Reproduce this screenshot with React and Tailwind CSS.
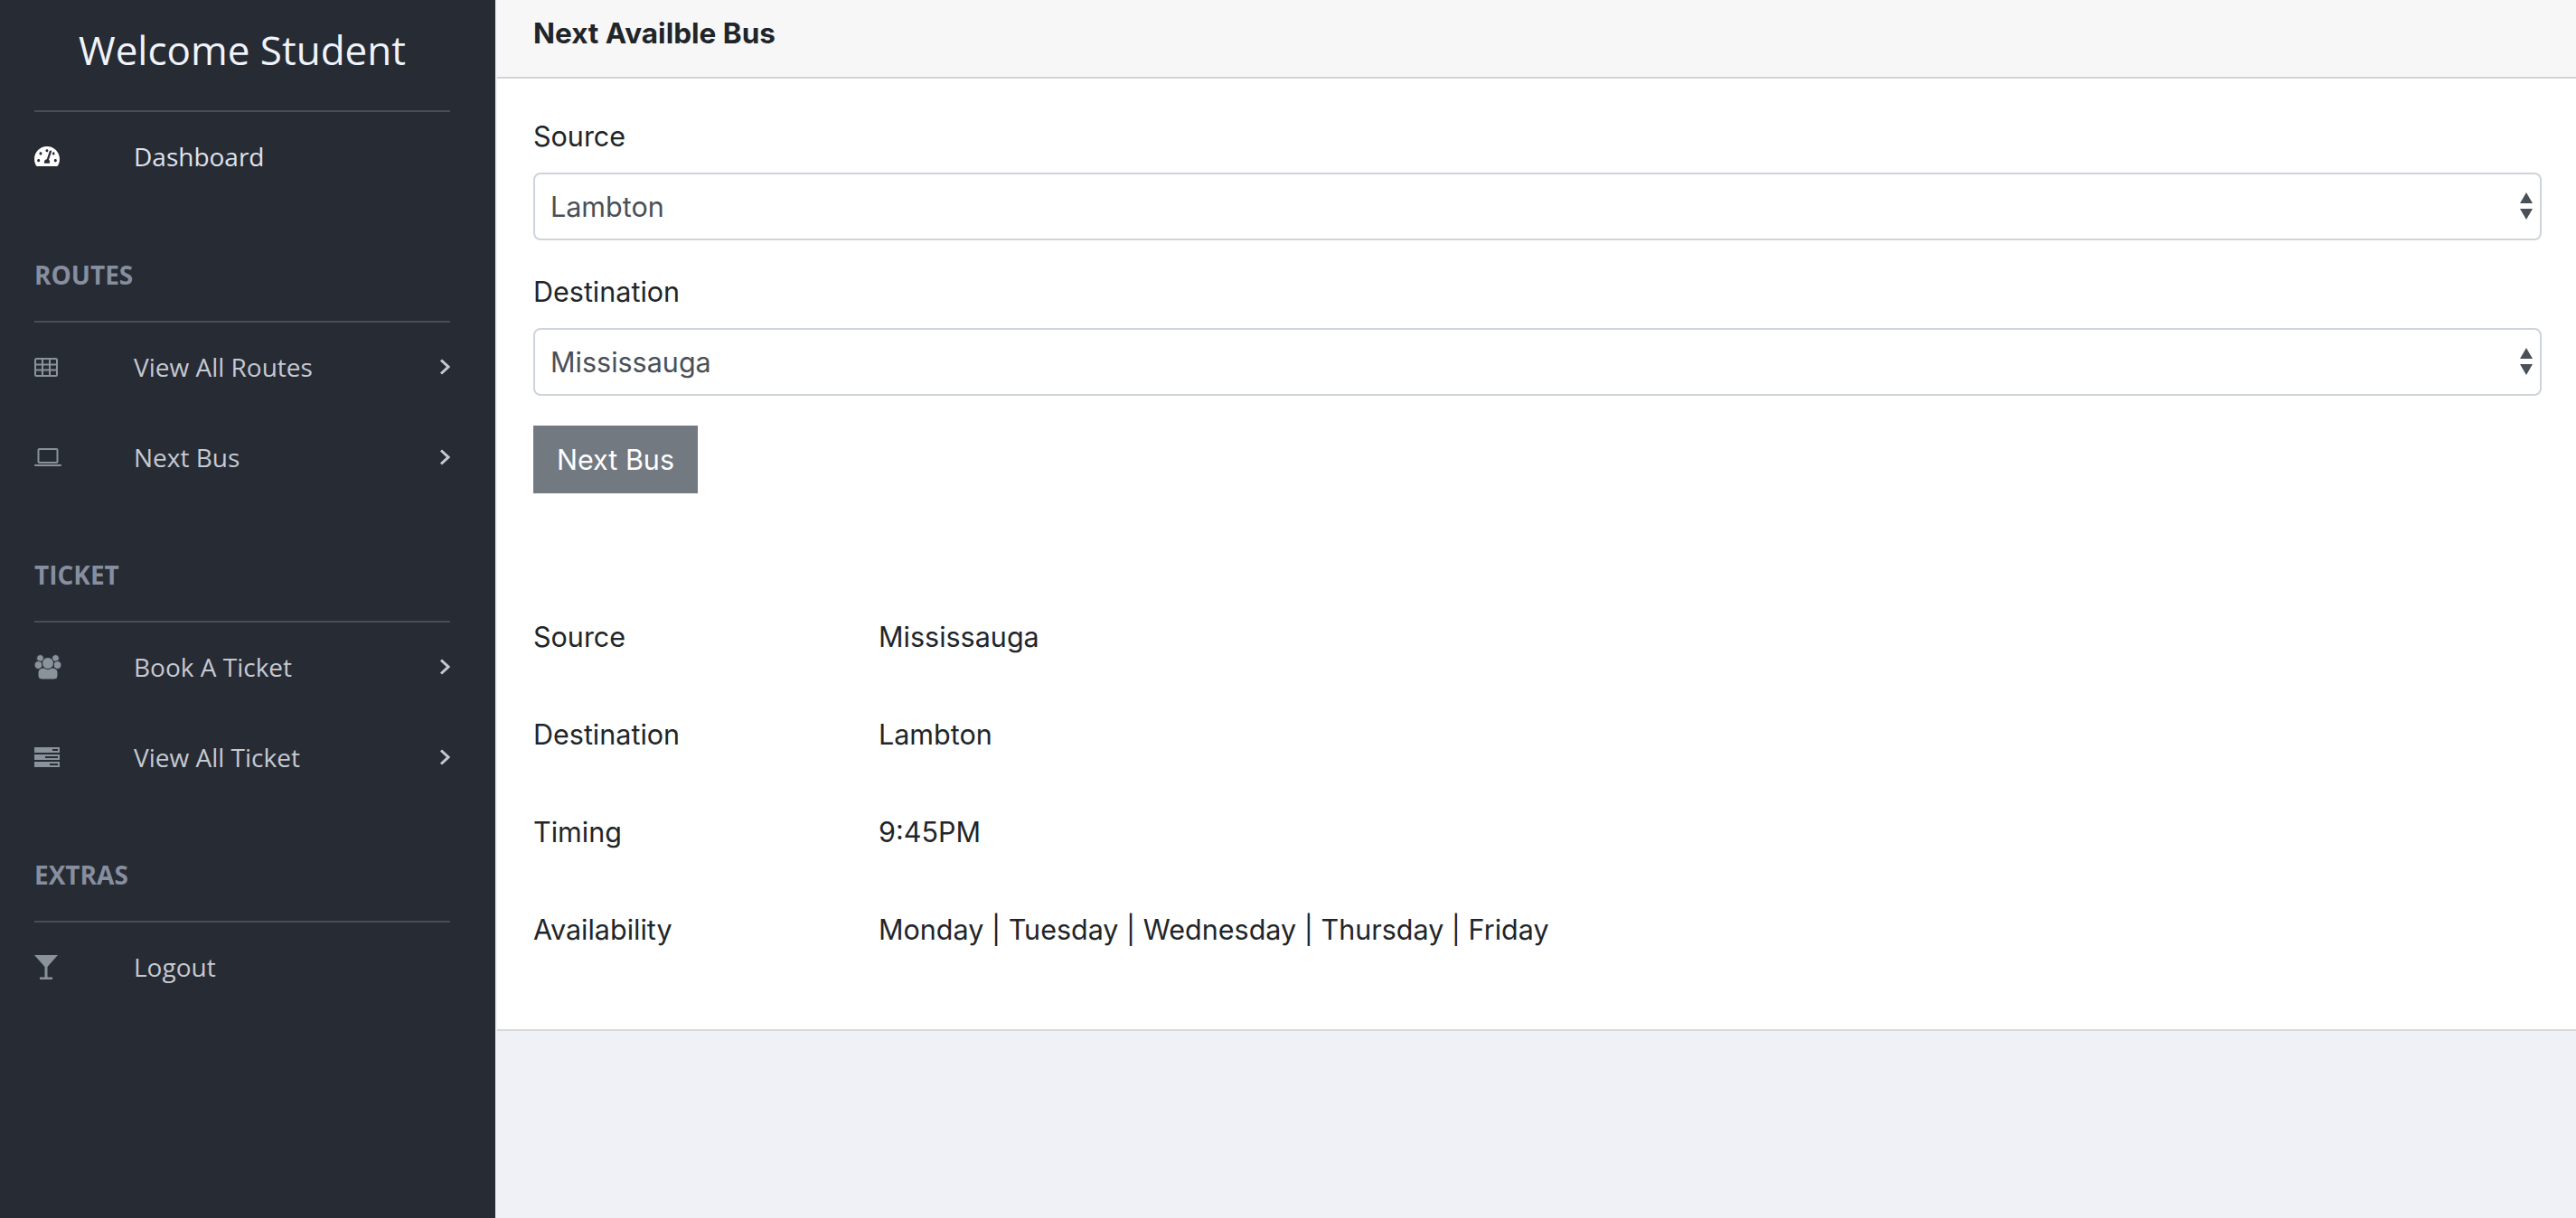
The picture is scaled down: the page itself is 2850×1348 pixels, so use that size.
import React from 'react';
import { FaTachometerAlt } from 'react-icons/fa';

const TableIcon = () => (
  <svg width="26" height="21" viewBox="0 0 26 21" fill="none" stroke="#8a929c" strokeWidth="2">
    <rect x="1" y="1" width="24" height="19" rx="1.5" />
    <path d="M1 7.5H25M1 13.5H25M9 2V20M17 2V20" />
  </svg>
);

const LaptopIcon = () => (
  <svg width="30" height="20" viewBox="0 0 30 20" fill="none">
    <rect x="4.5" y="1" width="21" height="15" rx="1" stroke="#8a929c" strokeWidth="2" />
    <path d="M0 18H30V18.5A1.5 1.5 0 0 1 28.5 20H1.5A1.5 1.5 0 0 1 0 18.5Z" fill="#8a929c" />
  </svg>
);

const UsersIcon = () => (
  <svg width="30" height="28" viewBox="0 0 30 28" fill="#8a929c" stroke="#272b34" strokeWidth="1">
    <circle cx="6.5" cy="4.5" r="4" />
    <circle cx="23.5" cy="4.5" r="4" />
    <circle cx="4.5" cy="12" r="4.5" />
    <circle cx="25.5" cy="12" r="4.5" />
    <path d="M4 21C4 17 7 15 10 15H20C23 15 26 17 26 21V24A4 4 0 0 1 22 28H8A4 4 0 0 1 4 24Z" />
    <circle cx="15" cy="10" r="6.5" />
  </svg>
);

const ServerIcon = () => (
  <svg width="28" height="22" viewBox="0 0 28 22">
    <path fill="#8a929c" d="M0 0H28V6H0ZM0 8H28V14H0ZM0 16H28V22H0Z" />
    <path fill="#272b34" d="M20 2H26V4H20ZM12 10H26V12H12ZM17 18H26V20H17Z" />
  </svg>
);

const MartiniIcon = () => (
  <svg width="26" height="27" viewBox="0 0 26 27" fill="#8a929c">
    <path d="M0 0H26L14.5 13V24.5H20V27H6V24.5H11.5V13Z" />
  </svg>
);

const Chevron = () => (
  <svg width="12" height="18" viewBox="0 0 12 18" fill="none" stroke="#c5c9d2" strokeWidth="3">
    <path d="M2 1.5L10 9L2 16.5" />
  </svg>
);

const sections = [
  {
    title: 'ROUTES',
    pad: 'pt-[61px]',
    items: [
      { label: 'View All Routes', icon: <TableIcon /> },
      { label: 'Next Bus', icon: <LaptopIcon /> },
    ],
  },
  {
    title: 'TICKET',
    pad: 'pt-[60px]',
    items: [
      { label: 'Book A Ticket', icon: <UsersIcon /> },
      { label: 'View All Ticket', icon: <ServerIcon /> },
    ],
  },
  {
    title: 'EXTRAS',
    pad: 'pt-[60px]',
    items: [{ label: 'Logout', icon: <MartiniIcon />, plain: true }],
  },
];

const details = [
  ['Source', 'Mississauga'],
  ['Destination', 'Lambton'],
  ['Timing', '9:45PM'],
  ['Availability', 'Monday | Tuesday | Wednesday | Thursday | Friday'],
];

const NavItem = ({ item }) => (
  <a className="flex h-[100px] items-center pb-[2px] text-[#c5c9d2]">
    <span className="flex w-[110px] shrink-0 items-center">{item.icon}</span>
    <span className="flex-1">{item.label}</span>
    {!item.plain && <Chevron />}
  </a>
);

const SelectField = ({ label, value, gap }) => (
  <div className={gap}>
    <label className="mb-[23px] block h-[35px] leading-[35px]">{label}</label>
    <div className="relative">
      <select
        defaultValue={value}
        className="block h-[75px] w-full appearance-none rounded-[8px] border-2 border-[#ced4da] bg-white px-[17px] text-[#495057]"
      >
        <option>{value}</option>
      </select>
      <svg className="absolute right-[10px] top-[22px]" width="14" height="30" viewBox="0 0 14 30" fill="#495057">
        <path d="M7 0L14 12H0ZM0 18H14L7 30Z" />
      </svg>
    </div>
  </div>
);

export default function App() {
  return (
    <div className="flex h-screen overflow-hidden bg-[#f0f1f6]">
      <aside className="w-[548px] shrink-0 bg-[#272b34] pl-[38px] pr-[50px] font-['Open_Sans',sans-serif] text-[28px]">
        <div className="flex h-[110px] items-center justify-center text-[44px] text-[#f0f3fa]">Welcome Student</div>
        <div className="mt-[12px] border-t-2 border-[#4a4d55]" />
        <a className="flex h-[100px] items-center pb-[2px] text-[#dfe3ee]">
          <span className="flex w-[110px] shrink-0 items-center">
            <FaTachometerAlt size={28} color="#ffffff" />
          </span>
          <span>Dashboard</span>
        </a>
        {sections.map((section) => (
          <div key={section.title} className={section.pad}>
            <h3 className="mb-[32px] h-[38px] font-bold leading-[38px] text-[#868e9f]">{section.title}</h3>
            <div className="border-t-2 border-[#4a4d55]" />
            {section.items.map((item) => (
              <NavItem key={item.label} item={item} />
            ))}
          </div>
        ))}
      </aside>

      <main className="ml-[2px] flex-1 font-['Inter',sans-serif] text-[30.5px] text-[#212529]">
        <div className="border-b-2 border-[#d8d8d8] bg-white">
          <div className="flex h-[87px] items-center border-b-2 border-[#d4d4d4] bg-[#f7f7f7] pb-[12px] pl-[40px] text-[31.5px] font-bold">
            Next Availble Bus
          </div>
          <div className="px-[40px] pb-[56px] pr-[38px] pt-[46px]">
            <SelectField label="Source" value="Lambton" gap="mb-[39px]" />
            <SelectField label="Destination" value="Mississauga" gap="mb-[33px]" />
            <button className="h-[75px] w-[182px] bg-[#727980] text-white">Next Bus</button>
            <div className="mt-[105px]">
              {details.map(([name, val]) => (
                <div key={name} className="flex h-[108px] items-center">
                  <span className="w-[382px] shrink-0">{name}</span>
                  <span>{val}</span>
                </div>
              ))}
            </div>
          </div>
        </div>
      </main>
    </div>
  );
}
